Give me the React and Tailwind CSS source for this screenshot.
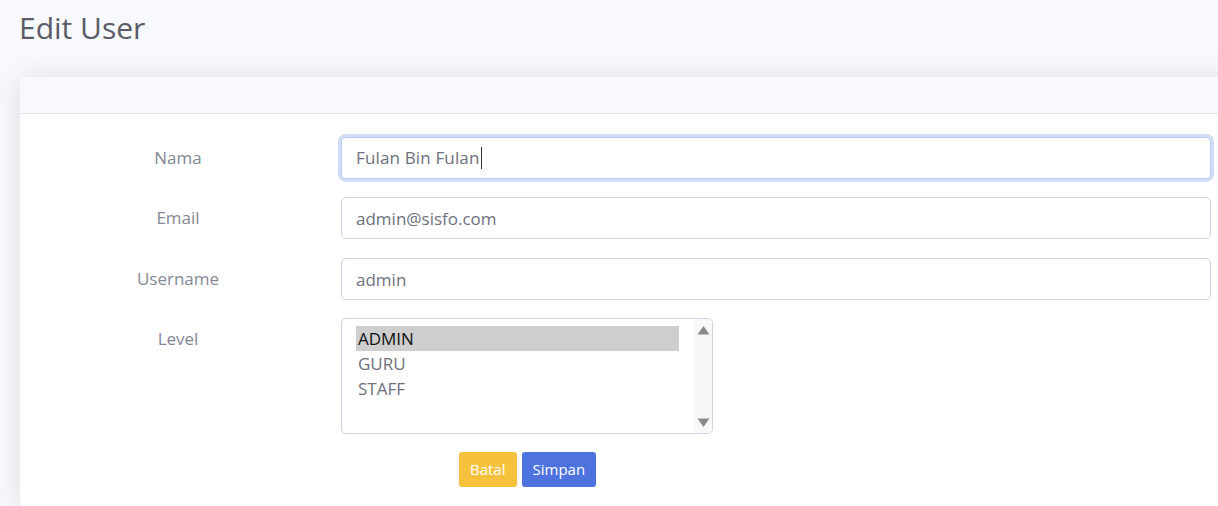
import React, { useState } from 'react';

const font = { fontFamily: '"Open Sans", Lato, sans-serif' };

const levels = ['ADMIN', 'GURU', 'STAFF'];

const Field = ({ label, className = '', children }) => (
  <div className={`flex items-start ${className}`}>
    <div className="w-[276px] h-[42px] pb-px flex items-center justify-center text-[17px] text-[#858796]">
      {label}
    </div>
    <div className="ml-[25px]">{children}</div>
  </div>
);

const EditUser = () => {
  const [email, setEmail] = useState('admin@sisfo.com');
  const [username, setUsername] = useState('admin');
  const [level, setLevel] = useState('ADMIN');

  return (
    <div className="min-h-[506px] w-[1218px] overflow-hidden bg-[#f8f9fc]" style={font}>
      <h3 className="pl-[19px] pt-[10px] text-[30px] leading-[36px] text-[#5a5c69]">Edit User</h3>

      {/* Card */}
      <div className="mt-[31px] ml-[20px] w-[1240px] rounded-[5px] bg-white shadow-[0_2px_28px_0_rgba(58,59,69,0.15)]">
        <div className="h-[37px] rounded-t-[5px] border-b border-[#e3e6f0] bg-[#f8f9fc]"></div>

        <div className="pl-[20px] pt-[23px] pb-[20px] flex flex-col gap-[18px]">
          <Field label="Nama">
            {/* focused input with caret */}
            <div className="w-[870px] h-[42px] pb-px flex items-center rounded-[5px] border border-[#bac8f3] px-[14px] text-[17px] text-[#6e707e] shadow-[0_0_0_3px_rgba(78,115,223,0.25)]">
              <span className="tracking-[0.15px]">Fulan Bin Fulan</span>
              <span className="ml-[1px] h-[22px] w-px bg-[#333]"></span>
            </div>
          </Field>

          <Field label="Email">
            <input
              value={email}
              onChange={(e) => setEmail(e.target.value)}
              className="w-[870px] h-[42px] rounded-[5px] border border-[#d1d3e2] px-[14px] text-[17px] text-[#6e707e] outline-none"
            />
          </Field>

          <Field label="Username" className="mt-px">
            <input
              value={username}
              onChange={(e) => setUsername(e.target.value)}
              className="w-[870px] h-[42px] rounded-[5px] border border-[#d1d3e2] px-[14px] text-[17px] text-[#6e707e] outline-none"
            />
          </Field>

          <Field label="Level">
            <div className="flex w-[372px] h-[116px] rounded-[5px] border border-[#d1d3e2] overflow-hidden">
              <div className="flex-1 pl-[14px] pr-[15px] pt-[7px]">
                {levels.map((l) => (
                  <div
                    key={l}
                    onClick={() => setLevel(l)}
                    className={`h-[25px] pl-[2px] text-[17px] leading-[25px] ${level === l ? 'bg-[#cecece] text-[#111]' : 'text-[#6e707e]'}`}
                  >
                    {l}
                  </div>
                ))}
              </div>
              {/* scrollbar */}
              <div className="w-[18px] bg-[#f8f8f8] flex flex-col items-center justify-between pt-[6px] pb-[5px]">
                <svg width="13" height="10" viewBox="0 0 13 10"><path d="M6.5 1 L12.5 9.5 L0.5 9.5 Z" fill="#8a8a8a" /></svg>
                <svg width="13" height="10" viewBox="0 0 13 10"><path d="M0.5 0.5 L12.5 0.5 L6.5 9 Z" fill="#8a8a8a" /></svg>
              </div>
            </div>
          </Field>

          <div className="flex gap-[5px] pl-[419px]">
            <button className="h-[35px] px-[11px] rounded-[3px] bg-[#f6c23e] text-[15px] text-white">Batal</button>
            <button className="h-[35px] px-[11px] rounded-[3px] bg-[#4e73df] text-[15px] text-white">Simpan</button>
          </div>
        </div>
      </div>
    </div>
  );
};

export default function App() {
  return <EditUser />;
}
